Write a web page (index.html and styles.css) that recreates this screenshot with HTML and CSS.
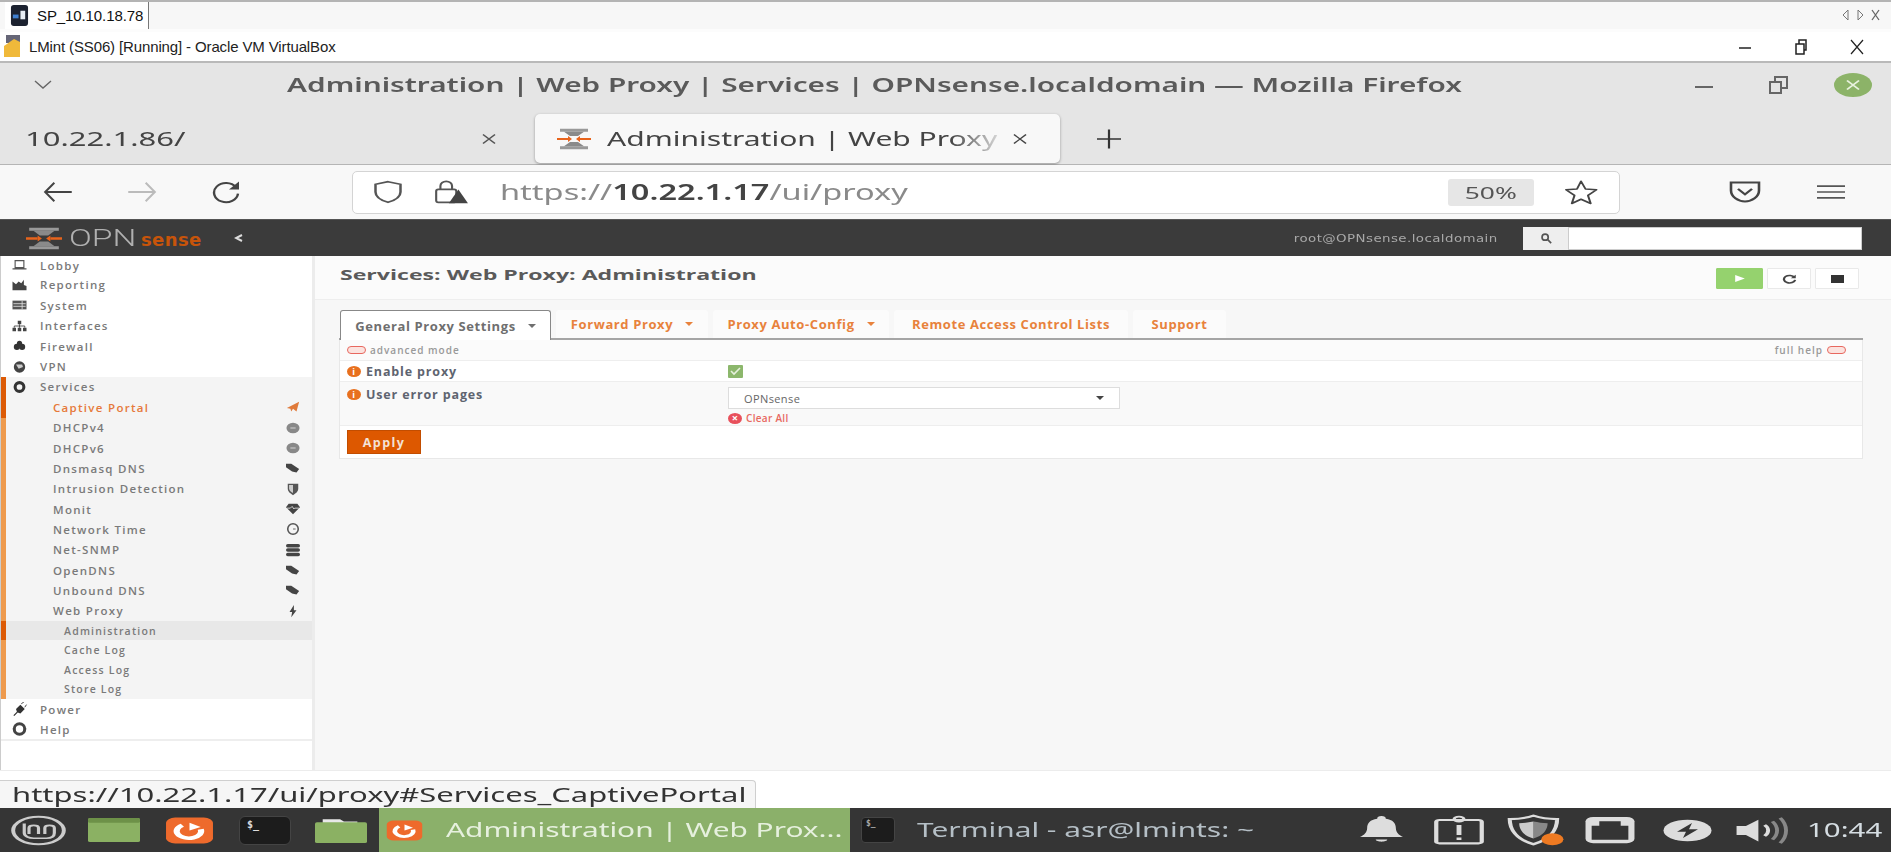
FILE: index.html
```html
<!DOCTYPE html>
<html lang="en">
<head>
    <meta charset="UTF-8">
    <title>Administration | Web Proxy | Services | OPNsense.localdomain</title>
    <link rel="stylesheet" href="styles.css">
</head>
<body>
    <div class="screen">
        <!-- remote desktop tabs -->
        <div class="rdp-bar">
            <div class="rdp-tab">
                <svg class="rdp-icon" viewBox="0 0 20 24"><rect x="1" y="1" width="18" height="22" rx="3" fill="#1c2230"/><rect x="3" y="11" width="6" height="4" fill="#3f7fd0"/><rect x="11" y="7" width="5" height="9" fill="#e8eef5"/></svg>
                <span>SP_10.10.18.78</span>
            </div>
            <div class="rdp-arrows">
                <svg width="40" height="14" viewBox="0 0 40 14"><path d="M7 2 2 7l5 5zM17 2l5 5-5 5z" fill="none" stroke="#777"/><path d="M31 2l7 10M38 2l-7 10" stroke="#666" stroke-width="1.3"/></svg>
            </div>
        </div>

        <!-- virtualbox window -->
        <div class="vbox-bar">
            <svg class="vbox-icon" viewBox="0 0 20 24"><rect x="4" y="0" width="14" height="8" fill="#667"/><path d="M2 22V11l10-7 6 3v15z" fill="#f0b93a"/></svg>
            <span class="vbox-title">LMint (SS06) [Running] - Oracle VM VirtualBox</span>
            <div class="vbox-controls">
                <svg width="14" height="14" viewBox="0 0 14 14"><path d="M1 8h12" stroke="#222" stroke-width="1.5"/></svg>
                <svg width="14" height="16" viewBox="0 0 14 16"><path d="M2 5h8v10H2zM5 5V1h7v10h-2" fill="none" stroke="#222" stroke-width="1.5"/></svg>
                <svg width="14" height="16" viewBox="0 0 14 16"><path d="M1 1l12 14M13 1 1 15" stroke="#222" stroke-width="1.2"/></svg>
            </div>
        </div>

        <!-- firefox -->
        <div class="ff-title">
            <svg class="ff-menu" width="18" height="10" viewBox="0 0 18 10"><path d="M1 1l8 7 8-7" fill="none" stroke="#666" stroke-width="1.4"/></svg>
            <span class="ff-title-text">Administration | Web Proxy | Services | OPNsense.localdomain — Mozilla Firefox</span>
            <div class="ff-controls">
                <svg width="20" height="10" viewBox="0 0 20 10"><path d="M1 7h18" stroke="#666" stroke-width="2"/></svg>
                <svg width="20" height="20" viewBox="0 0 20 20"><path d="M1 7h11v11H1zM6 7V2h12v11h-6" fill="none" stroke="#666" stroke-width="2"/></svg>
                <span class="ff-close"><svg width="16" height="12" viewBox="0 0 16 16" preserveAspectRatio="none"><path d="M2 2l12 12M14 2 2 14" stroke="#e8f2df" stroke-width="2"/></svg></span>
            </div>
        </div>
        <div class="ff-tabs">
            <div class="tab-plain">
                <span class="tab-plain-text">10.22.1.86/</span>
                <svg width="16" height="12" viewBox="0 0 16 16" preserveAspectRatio="none"><path d="M2 2l12 12M14 2 2 14" stroke="#555" stroke-width="1.5"/></svg>
            </div>
            <div class="tab-active">
                <svg class="tab-fav" viewBox="0 0 34 30" preserveAspectRatio="none"><use href="#opn-mark"/></svg>
                <span class="tab-active-text">Administration | Web Proxy</span>
                <svg width="16" height="12" viewBox="0 0 16 16" preserveAspectRatio="none"><path d="M2 2l12 12M14 2 2 14" stroke="#444" stroke-width="1.6"/></svg>
            </div>
            <svg class="tab-new" width="28" height="22" viewBox="0 0 28 28" preserveAspectRatio="none"><path d="M14 2v24M2 14h24" stroke="#333" stroke-width="2.2"/></svg>
        </div>
        <div class="ff-nav">
            <svg class="nav-back" width="34" height="22" viewBox="0 0 34 24"><path d="M32 12H3M13 2 3 12l10 10" fill="none" stroke="#444" stroke-width="2.2"/></svg>
            <svg class="nav-fwd" width="34" height="22" viewBox="0 0 34 24"><path d="M2 12h29M21 2l10 10-10 10" fill="none" stroke="#bbb" stroke-width="2.2"/></svg>
            <svg class="nav-reload" width="34" height="24" viewBox="0 0 34 30" preserveAspectRatio="none"><path d="M27 9a12 12 0 1 0 2 8" fill="none" stroke="#444" stroke-width="2.4"/><path d="M30 2v10H20z" fill="#444"/></svg>
            <div class="urlbar">
                <svg class="url-shield" width="30" height="24" viewBox="0 0 24 28" preserveAspectRatio="none"><path d="M12 2 22 5v9c0 6-5 10-10 12C7 24 2 20 2 14V5z" fill="none" stroke="#555" stroke-width="2"/></svg>
                <svg class="url-lock" width="36" height="24" viewBox="0 0 34 28" preserveAspectRatio="none"><rect x="3" y="11" width="19" height="15" rx="2" fill="none" stroke="#555" stroke-width="2"/><path d="M7 11V7a5.500 5.500 0 0 1 11 0v4" fill="none" stroke="#555" stroke-width="2"/><path d="M24 11l9 16H15z" fill="#444"/></svg>
                <span class="url-text">https://<b>10.22.1.17</b>/ui/proxy</span>
                <span class="url-zoom"><span class="url-zoom-text">50%</span></span>
                <svg class="url-star" width="36" height="26" viewBox="0 0 36 34" preserveAspectRatio="none"><path d="M18 3l4.500 10 11 1-8.500 7.500 2.700 10.500L18 26.500 8.800 32l2.700-10.500L3 14l11-1z" fill="none" stroke="#444" stroke-width="2" stroke-linejoin="round"/></svg>
            </div>
            <svg class="nav-pocket" width="32" height="22" viewBox="0 0 32 28" preserveAspectRatio="none"><path d="M2 2h28v10c0 8-7 14-14 14S2 20 2 12z" fill="none" stroke="#444" stroke-width="2.6"/><path d="M9 10l7 7 7-7" fill="none" stroke="#444" stroke-width="2.6"/></svg>
            <svg class="nav-menu" width="28" height="16" viewBox="0 0 28 22" preserveAspectRatio="none"><path d="M0 3h28M0 11h28M0 19h28" stroke="#555" stroke-width="2.4"/></svg>
        </div>

        <!-- opnsense page -->
        <div class="opn">
            <header class="opn-head">
                <svg class="opn-mark" viewBox="0 0 34 30" preserveAspectRatio="none"><use href="#opn-mark"/></svg>
                <span class="opn-logo"><span class="opn-word">OPN</span><span class="opn-sense">sense</span></span>
                <svg class="opn-collapse" width="9" height="8" viewBox="0 0 9 8"><path d="M8 1 2 4l6 3" fill="none" stroke="#ddd" stroke-width="2"/></svg>
                <span class="opn-user">root@OPNsense.localdomain</span>
                <div class="opn-search">
                    <span class="opn-search-btn"><svg width="14" height="12" viewBox="0 0 14 14"><circle cx="6" cy="6" r="3.600" fill="none" stroke="#555" stroke-width="2"/><path d="M9 9l4 4" stroke="#555" stroke-width="2"/></svg></span>
                    <span class="opn-search-input"></span>
                </div>
            </header>
            <div class="opn-body">
                <nav class="side">
                    <a class="side-item"><svg class="i"><use href="#i-laptop"/></svg>Lobby</a>
                    <a class="side-item"><svg class="i"><use href="#i-chart"/></svg>Reporting</a>
                    <a class="side-item"><svg class="i"><use href="#i-server"/></svg>System</a>
                    <a class="side-item"><svg class="i"><use href="#i-net"/></svg>Interfaces</a>
                    <a class="side-item"><svg class="i"><use href="#i-fire"/></svg>Firewall</a>
                    <a class="side-item"><svg class="i"><use href="#i-globe"/></svg>VPN</a>
                    <div class="side-group">
                        <span class="side-mark"></span>
                        <a class="side-item"><svg class="i"><use href="#i-cog"/></svg>Services</a>
                        <a class="side-sub current">Captive Portal<svg class="i-r"><use href="#i-plane"/></svg></a>
                        <a class="side-sub">DHCPv4<svg class="i-r"><use href="#i-disc"/></svg></a>
                        <a class="side-sub">DHCPv6<svg class="i-r"><use href="#i-disc"/></svg></a>
                        <a class="side-sub">Dnsmasq DNS<svg class="i-r"><use href="#i-tags"/></svg></a>
                        <a class="side-sub">Intrusion Detection<svg class="i-r"><use href="#i-shield"/></svg></a>
                        <a class="side-sub">Monit<svg class="i-r"><use href="#i-heart"/></svg></a>
                        <a class="side-sub">Network Time<svg class="i-r"><use href="#i-clock"/></svg></a>
                        <a class="side-sub">Net-SNMP<svg class="i-r"><use href="#i-db"/></svg></a>
                        <a class="side-sub">OpenDNS<svg class="i-r"><use href="#i-tags"/></svg></a>
                        <a class="side-sub">Unbound DNS<svg class="i-r"><use href="#i-tags"/></svg></a>
                        <a class="side-sub">Web Proxy<svg class="i-r"><use href="#i-bolt"/></svg></a>
                        <a class="side-leaf active">Administration</a>
                        <a class="side-leaf">Cache Log</a>
                        <a class="side-leaf">Access Log</a>
                        <a class="side-leaf">Store Log</a>
                    </div>
                    <a class="side-item"><svg class="i"><use href="#i-plug"/></svg>Power</a>
                    <a class="side-item last"><svg class="i"><use href="#i-help"/></svg>Help</a>
                </nav>
                <main class="main">
                    <div class="page-head">
                        <h1>Services: Web Proxy: Administration</h1>
                        <div class="svc-btns">
                            <span class="svc-btn go"><svg width="12" height="9" viewBox="0 0 10 10" preserveAspectRatio="none"><path d="M1 1l8 4-8 4z" fill="#fff"/></svg></span>
                            <span class="svc-btn"><svg width="15" height="10" viewBox="0 0 12 12" preserveAspectRatio="none"><path d="M10 4a4.500 4.500 0 1 0 .5 3" fill="none" stroke="#444" stroke-width="1.800"/><path d="M11 1v4H7z" fill="#444"/></svg></span>
                            <span class="svc-btn"><svg width="13" height="8" viewBox="0 0 12 8" preserveAspectRatio="none"><rect width="12" height="8" fill="#333"/></svg></span>
                        </div>
                    </div>
                    <div class="content">
                        <ul class="tabs">
                            <li class="tab on">General Proxy Settings<i class="caret"></i></li>
                            <li class="tab t-forward">Forward Proxy<i class="caret"></i></li>
                            <li class="tab t-pac">Proxy Auto-Config<i class="caret"></i></li>
                            <li class="tab t-remote">Remote Access Control Lists</li>
                            <li class="tab t-support">Support</li>
                        </ul>
                        <form class="panel">
                            <div class="row row-help">
                                <span class="adv"><i class="toggle"></i>advanced mode</span>
                                <span class="adv">full help<i class="toggle after"></i></span>
                            </div>
                            <div class="row row-enable">
                                <label class="lbl"><i class="info">i</i>Enable proxy</label>
                                <span class="check"><svg width="11" height="9" viewBox="0 0 11 9"><path d="M1 4l3 3 6-6" fill="none" stroke="#e6f0dc" stroke-width="1.600"/></svg></span>
                            </div>
                            <div class="row row-pages">
                                <label class="lbl"><i class="info">i</i>User error pages</label>
                                <div class="field">
                                    <div class="select">OPNsense<i class="caret dark"></i></div>
                                    <span class="clear"><i class="clear-x">×</i>Clear All</span>
                                </div>
                            </div>
                            <div class="row row-apply">
                                <button class="apply" type="button">Apply</button>
                            </div>
                        </form>
                    </div>
                </main>
            </div>
        </div>

        <div class="status-strip">
            <div class="status-link"><span class="status-text">https://10.22.1.17/ui/proxy#Services_CaptivePortal</span></div>
        </div>

        <!-- mint panel -->
        <footer class="panel-bar">
            <svg class="p-mint" viewBox="0 0 36 36" preserveAspectRatio="none"><circle cx="18" cy="18" r="16" fill="none" stroke="#ccc" stroke-width="2.500"/><path d="M9 10v11c0 4 3 6 6 6h8c3 0 5-2 5-6v-6c0-2-1-3-3-3s-3 1-3 3v7M18 22v-7c0-2-1-3-3-3s-3 1-3 3v7" fill="none" stroke="#ccc" stroke-width="2"/></svg>
            <svg class="p-win" viewBox="0 0 54 30" preserveAspectRatio="none"><rect width="54" height="30" rx="2" fill="#8bb163"/><rect width="54" height="6" rx="2" fill="#6d9148"/></svg>
            <svg class="p-ff" viewBox="0 0 48 46" preserveAspectRatio="none"><use href="#ff-glyph"/></svg>
            <span class="p-term"><b>$_</b></span>
            <svg class="p-folder" viewBox="0 0 54 34" preserveAspectRatio="none"><path d="M8 6V3h18l4 3h14v3H8z" fill="#e8e8e8"/><rect y="7" width="54" height="27" rx="2" fill="#8bb163"/></svg>
            <div class="p-task-on">
                <svg class="p-ff small" viewBox="0 0 48 46" preserveAspectRatio="none"><use href="#ff-glyph"/></svg>
                <span class="task-text">Administration | Web Prox...</span>
            </div>
            <div class="p-task">
                <span class="p-term small"><b>$_</b></span>
                <span class="task-text">Terminal - asr@lmints: ~</span>
            </div>
            <div class="tray">
                <svg class="t-bell" viewBox="0 0 30 34" preserveAspectRatio="none"><path d="M15 1c2 0 3 1 3 3 5 1 7 5 7 10 0 5 2 8 5 10H0c3-2 5-5 5-10 0-5 2-9 7-10 0-2 1-3 3-3z" fill="#ddd"/><path d="M11 27h8c0 3-8 3-8 0z" fill="#ddd"/></svg>
                <svg class="t-clip" viewBox="0 0 32 36" preserveAspectRatio="none"><rect x="2" y="6" width="28" height="28" rx="2" fill="none" stroke="#ddd" stroke-width="2.600"/><circle cx="16" cy="5" r="3" fill="none" stroke="#ddd" stroke-width="2"/><path d="M16 12v12M16 27v3" stroke="#ddd" stroke-width="3"/></svg>
                <svg class="t-shield" viewBox="0 0 38 38" preserveAspectRatio="none"><path d="M18 2c5 3 10 4 15 4 0 12-4 24-15 30C7 30 3 18 3 6c5 0 10-1 15-4z" fill="none" stroke="#ddd" stroke-width="2.600"/><path d="M18 9c3 1 6 2 9 2 0 8-3 15-9 18z" fill="#888"/><path d="M18 9c-3 1-6 2-9 2 0 8 3 15 9 18z" fill="#ccc"/><circle cx="30" cy="30" r="7" fill="#ee7a22"/></svg>
                <svg class="t-net" viewBox="0 0 34 32" preserveAspectRatio="none"><rect x="1" y="1" width="32" height="30" rx="5" fill="#ddd"/><path d="M5 11h5V6h14v5h5v16H5z" fill="#353535"/></svg>
                <svg class="t-power" viewBox="0 0 34 34" preserveAspectRatio="none"><circle cx="17" cy="17" r="16" fill="#ddd"/><path d="M20 6 10 19h6l-2 9 10-13h-6z" fill="#353535"/></svg>
                <svg class="t-vol" viewBox="0 0 34 32" preserveAspectRatio="none"><path d="M1 11h6l8-7v24l-8-7H1z" fill="#ddd"/><path d="M19 10c3 3 3 9 0 12" fill="none" stroke="#ddd" stroke-width="2.500"/><path d="M24 6c4 6 4 14 0 20M29 2c5 8 5 20 0 28" fill="none" stroke="#888" stroke-width="2.500"/></svg>
                <span class="clock">10:44</span>
            </div>
        </footer>
    </div>

    <svg class="defs" aria-hidden="true">
        <defs>
            <g id="opn-mark">
                <path d="M3 1h28v4H3zM3 25h28v4H3z" fill="#999"/>
                <path d="M7 5h20l-6 6H13zM13 19h8l6 6H7z" fill="#8a8a8a"/>
                <path d="M0 15h11M23 15h11" stroke="#e8641c" stroke-width="3"/>
                <path d="M11 11l4 4-4 4zM23 11l-4 4 4 4z" fill="#e8641c"/>
            </g>
            <g id="ff-glyph">
                <rect x="1" y="1" width="46" height="44" rx="9" fill="#ee6a2c"/>
                <path d="M17 14a12 12 0 1 0 18 7" fill="none" stroke="#fff" stroke-width="6"/>
                <path d="M24 10l11 7-11 6z" fill="#fff"/>
            </g>
            <symbol id="i-laptop" viewBox="0 0 16 16"><path d="M3 3h10v8H3zM0 12.500h16" fill="none" stroke="#555" stroke-width="1.300"/></symbol>
            <symbol id="i-chart" viewBox="0 0 16 16"><path d="M0 14V4l4 3 3-3 3 2 3-4v6l3 1v5z" fill="#444"/></symbol>
            <symbol id="i-server" viewBox="0 0 16 16"><path d="M0 3h16v10H0z" fill="#555"/><path d="M1 6.500h14M1 9.500h14M11 3v10" stroke="#ddd"/></symbol>
            <symbol id="i-net" viewBox="0 0 16 16"><path d="M6 2h4v4H6zM0 10h4v4H0zM6 10h4v4H6zM12 10h4v4h-4z" fill="#444"/><path d="M8 6v4M2 10V8h12v2" stroke="#444" fill="none"/></symbol>
            <symbol id="i-fire" viewBox="0 0 16 16"><circle cx="5" cy="9" r="3.500" fill="#333"/><circle cx="11" cy="9" r="3.500" fill="#333"/><circle cx="8" cy="5" r="3" fill="#333"/></symbol>
            <symbol id="i-globe" viewBox="0 0 16 16"><circle cx="8" cy="8" r="6.500" fill="#444"/><path d="M4 5h7l1 3-5 2z" fill="#ccc"/></symbol>
            <symbol id="i-cog" viewBox="0 0 16 16"><circle cx="8" cy="8" r="5" fill="none" stroke="#333" stroke-width="3.500"/></symbol>
            <symbol id="i-plane" viewBox="0 0 16 16"><path d="M1 9 15 2l-3 11-4-3-2 3-1-3z" fill="#e07a3a"/></symbol>
            <symbol id="i-disc" viewBox="0 0 16 16"><ellipse cx="8" cy="8" rx="7.500" ry="6" fill="#888"/><path d="M5 8h6" stroke="#ddd"/></symbol>
            <symbol id="i-tags" viewBox="0 0 16 16"><path d="M0 3h6l9 6-3 4-5-1-7-5z" fill="#444"/></symbol>
            <symbol id="i-shield" viewBox="0 0 16 16"><path d="M2 2h12v6c0 3-3 5-6 7-3-2-6-4-6-7z" fill="#555"/><path d="M3.500 3.500H8v9c-2-1-4.500-2.500-4.500-5z" fill="#ccc"/></symbol>
            <symbol id="i-heart" viewBox="0 0 16 16"><path d="M8 14 0 6l3-4h10l3 4z" fill="#444"/><path d="M1 7h4l2-2 2 3 1-1h5" fill="none" stroke="#ddd"/></symbol>
            <symbol id="i-clock" viewBox="0 0 16 16"><circle cx="8" cy="8" r="6" fill="none" stroke="#555" stroke-width="1.800"/><path d="M8 8h3" stroke="#555"/></symbol>
            <symbol id="i-db" viewBox="0 0 16 16"><rect y="1" width="16" height="4" rx="2" fill="#444"/><rect y="6" width="16" height="4" rx="2" fill="#444"/><rect y="11" width="16" height="4" rx="2" fill="#444"/></symbol>
            <symbol id="i-bolt" viewBox="0 0 16 16"><path d="M9 1 4 9h3l-1 6 6-8H9z" fill="#444"/></symbol>
            <symbol id="i-plug" viewBox="0 0 16 16"><path d="M1 15l4-4-1-3 5-5 5 5-5 5-3-1-4 4z" fill="#333"/><path d="M10 2l3-2M14 6l2-3" stroke="#333"/></symbol>
            <symbol id="i-help" viewBox="0 0 16 16"><circle cx="8" cy="8" r="6" fill="none" stroke="#444" stroke-width="3.500"/></symbol>
        </defs>
    </svg>
</body>
</html>
```

FILE: styles.css
```css
* {
    box-sizing: border-box;
}

html, body {
    margin: 0;
    padding: 0;
    overflow: hidden;
    background-color: #fff;
}

.screen {
    width: 1891px;
    height: 852px;
    display: flex;
    flex-direction: column;
    overflow: hidden;
    font-family: "Open Sans", sans-serif;
}

.defs {
    position: absolute;
    width: 0;
    height: 0;
}

/* remote desktop tabs */
.rdp-bar {
    height: 32px;
    flex: none;
    display: flex;
    align-items: center;
    justify-content: space-between;
    background-color: #f7f7f7;
    border-top: 2px solid #b4b4b4;
    border-bottom: 3px solid #fcfcfc;
    padding: 0 10px 0 5px;
}

.rdp-tab {
    display: flex;
    align-items: center;
    gap: 8px;
    height: 27px;
    width: 144px;
    padding-left: 5px;
    background-color: #fff;
    border-right: 1px solid #777;
    font-family: "Liberation Sans", sans-serif;
    font-size: 15px;
    letter-spacing: -0.1px;
    color: #111;
}

.rdp-icon {
    width: 19px;
    height: 23px;
}

.vbox-bar {
    height: 31px;
    flex: none;
    display: flex;
    align-items: center;
    background-color: #fff;
    border-bottom: 2px solid #b9b9b9;
    padding: 0 27px 0 2px;
}

.vbox-icon {
    width: 20px;
    height: 24px;
    margin-right: 7px;
}

.vbox-title {
    font-family: "Liberation Sans", sans-serif;
    font-size: 15px;
    letter-spacing: -0.13px;
    color: #222;
}

.vbox-controls {
    margin-left: auto;
    display: flex;
    align-items: center;
    gap: 42px;
}

/* firefox: the remote screen is stretched sideways, hence the scaleX on its text */
.ff-title {
    height: 50px;
    flex: none;
    display: flex;
    align-items: center;
    background-color: #e5e5e5;
    padding: 0 0 6px 34px;
}

.ff-menu {
    margin-right: 235px;
}

.ff-title-text {
    font-family: "Noto Sans", sans-serif;
    font-size: 19px;
    font-weight: 600;
    color: #5a5a5a;
    white-space: nowrap;
    transform: scaleX(1.567);
    transform-origin: left center;
}

.ff-controls {
    margin-left: auto;
    display: flex;
    align-items: center;
    gap: 55px;
    padding-right: 19px;
}

.ff-close {
    width: 38px;
    height: 24px;
    border-radius: 50%;
    background-color: #8cb368;
    display: flex;
    align-items: center;
    justify-content: center;
    margin-left: -10px;
}

.ff-tabs {
    height: 52px;
    flex: none;
    display: flex;
    align-items: center;
    background-color: #e5e5e5;
    border-bottom: 1px solid #b5b5b5;
}

.tab-plain {
    width: 535px;
    display: flex;
    align-items: center;
    justify-content: space-between;
    padding: 0 38px 0 25px;
    font-family: "Noto Sans", sans-serif;
    font-size: 19px;
    color: #444;
}

.tab-plain-text {
    transform: scaleX(1.63);
    transform-origin: left center;
}

.tab-active {
    width: 525px;
    height: 49px;
    display: flex;
    align-items: center;
    padding: 0 32px 0 22px;
    background-color: #f8f8f8;
    border-radius: 5px;
    box-shadow: 0 1px 3px rgba(0,0,0,0.35);
    font-family: "Noto Sans", sans-serif;
    font-size: 19px;
    color: #444;
}

.tab-fav {
    width: 34px;
    height: 22px;
    flex: none;
    margin-right: 16px;
}

.tab-active-text {
    flex: none;
    white-space: nowrap;
    transform: scaleX(1.58);
    transform-origin: left center;
    -webkit-mask-image: linear-gradient(to right, #000 88%, rgba(0,0,0,0.2) 100%);
    mask-image: linear-gradient(to right, #000 88%, rgba(0,0,0,0.2) 100%);
}

.tab-active svg:last-child {
    margin-left: auto;
}

.tab-new {
    margin-left: 35px;
}

.ff-nav {
    height: 54px;
    flex: none;
    display: flex;
    align-items: center;
    background-color: #f8f8f8;
    padding-left: 41px;
}

.nav-fwd {
    margin-left: 50px;
}

.nav-reload {
    margin-left: 50px;
}

.urlbar {
    width: 1268px;
    height: 43px;
    margin-left: 109px;
    display: flex;
    align-items: center;
    background-color: #fff;
    border: 1px solid #d4d4d4;
    border-radius: 5px;
    padding-left: 20px;
}

.url-lock {
    margin-left: 30px;
}

.url-text {
    margin-left: 31px;
    font-family: "Noto Sans", sans-serif;
    font-size: 21px;
    color: #8a8a8a;
    white-space: nowrap;
    transform: scaleX(1.55);
    transform-origin: left center;
}

.url-text b {
    font-weight: 600;
    color: #444;
}

.url-zoom {
    margin-left: auto;
    width: 86px;
    height: 27px;
    display: flex;
    align-items: center;
    justify-content: center;
    background-color: #e6e6e6;
    border-radius: 3px;
    font-family: "Noto Sans", sans-serif;
    font-size: 17px;
    color: #555;
}

.url-zoom-text {
    transform: scaleX(1.55);
}

.url-star {
    margin: 0 20px 0 29px;
}

.nav-pocket {
    margin-left: 109px;
}

.nav-menu {
    margin-left: 56px;
}

/* opnsense page */
.opn {
    height: 551px;
    flex: none;
    display: flex;
    flex-direction: column;
    filter: blur(0.55px);
}

.opn-head {
    height: 37px;
    flex: none;
    display: flex;
    align-items: center;
    background-color: #3b3b3b;
    border-top: 1px solid #555;
    padding-left: 26px;
}

.opn-mark {
    width: 36px;
    height: 23px;
}

.opn-logo {
    width: 165px;
    margin-left: 7px;
    display: flex;
    align-items: baseline;
    white-space: nowrap;
}

.opn-word {
    width: 72px;
    font-family: "Roboto", sans-serif;
    font-size: 24px;
    font-weight: 300;
    line-height: 30px;
    color: #b0b0b0;
    transform: scaleX(1.4);
    transform-origin: left center;
}

.opn-sense {
    font-family: "DejaVu Sans", sans-serif;
    font-size: 18px;
    font-weight: 700;
    letter-spacing: 0.4px;
    color: #c7540a;
}

.opn-user {
    margin-left: auto;
    font-family: "DejaVu Sans", sans-serif;
    font-size: 11px;
    letter-spacing: 0.35px;
    color: #a9a9a9;
    transform: scaleX(1.216);
    transform-origin: right center;
}

.opn-search {
    display: flex;
    height: 23px;
    margin: 0 29px 0 25px;
}

.opn-search-btn {
    width: 45px;
    display: flex;
    align-items: center;
    justify-content: center;
    background-color: #eee;
}

.opn-search-input {
    width: 294px;
    background-color: #fff;
    border: 1px solid #ccc;
}

.opn-body {
    flex: 1;
    display: flex;
    min-height: 0;
}

.side {
    width: 315px;
    flex: none;
    display: flex;
    flex-direction: column;
    background-color: #fff;
    border-left: 1px solid #ccc;
    border-right: 3px solid #ececec;
    color: #7a7a7a;
    font-size: 11.5px;
    font-weight: 600;
    letter-spacing: 1.3px;
}

.side-item {
    height: 20.4px;
    flex: none;
    display: flex;
    align-items: center;
    padding-left: 10px;
}

.side > .side-item:first-child {
    height: 18.8px;
}

.side-item.last {
    height: 22px;
    border-bottom: 2px solid #eee;
}

.i {
    width: 17px;
    height: 14px;
    margin-right: 12px;
    flex: none;
}

.side-group {
    position: relative;
    background-color: #f4f4f4;
    border-left: 5px solid #ee9a4d;
}

.side-group .side-item {
    padding-left: 5px;
}

.side-mark {
    position: absolute;
    left: -5px;
    top: 0;
    width: 5px;
    height: 41px;
    background-color: #dc5a05;
}

.side-sub {
    height: 20.35px;
    display: flex;
    align-items: center;
    justify-content: space-between;
    padding: 0 11px 0 47px;
}

.current {
    color: #e6793a;
}

.i-r {
    width: 16px;
    height: 14px;
    flex: none;
}

.side-leaf {
    position: relative;
    height: 19.5px;
    display: flex;
    align-items: center;
    padding-left: 58px;
    font-size: 10.5px;
    letter-spacing: 1.2px;
}

.side-leaf.active {
    background-color: #e8e8e8;
}

.side-leaf.active::before {
    content: "";
    position: absolute;
    left: -5px;
    top: 0;
    bottom: 0;
    width: 5px;
    background-color: #dc5a05;
}

.main {
    flex: 1;
    display: flex;
    flex-direction: column;
    background-color: #f7f7f7;
}

.page-head {
    height: 44px;
    flex: none;
    display: flex;
    align-items: center;
    justify-content: space-between;
    background-color: #fbfbfb;
    border-bottom: 1px solid #eee;
    padding: 0 32px 0 25px;
}

.page-head h1 {
    margin: 0 0 6px 0;
    font-size: 14px;
    font-weight: 700;
    color: #5a5a5a;
    transform: scaleX(1.65);
    transform-origin: left center;
}

.svc-btns {
    display: flex;
    gap: 4px;
    margin-top: 2px;
}

.svc-btn {
    width: 44px;
    height: 21px;
    display: flex;
    align-items: center;
    justify-content: center;
    background-color: #fff;
    border: 1px solid #e9e9e9;
    border-radius: 1px;
}

.svc-btn.go {
    width: 47px;
    background-color: #95d26e;
    border-color: #95d26e;
}

.content {
    padding: 10px 28px 0 24px;
}

.tabs {
    list-style: none;
    margin: 0;
    padding: 0 0 0 1px;
    display: flex;
    gap: 5px;
    height: 30px;
    border-bottom: 2px solid #a5a5a5;
}

.tab {
    display: flex;
    align-items: center;
    justify-content: center;
    height: 28px;
    background-color: #fbfbfb;
    border-radius: 3px 3px 0 0;
    font-size: 13px;
    font-weight: 700;
    letter-spacing: 0.6px;
    color: #e8823c;
    white-space: nowrap;
}

.tab.on {
    width: 211px;
    height: 30px;
    background-color: #fff;
    color: #6f6f6f;
    border: 1px solid #888;
    border-bottom: none;
}

.t-forward {
    width: 152px;
}

.t-pac {
    width: 176px;
}

.t-remote {
    width: 234px;
}

.t-support {
    width: 93px;
}

.caret {
    display: inline-block;
    margin-left: 12px;
    border-left: 4px solid transparent;
    border-right: 4px solid transparent;
    border-top: 4px solid currentColor;
}

.caret.dark {
    margin-left: auto;
    color: #444;
}

.panel {
    display: block;
    background-color: #fff;
    border: 1px solid #e8e8e8;
    border-top: none;
    margin: 0;
}

.row {
    display: flex;
    border-bottom: 1px solid #eee;
    padding-left: 7px;
}

.row-help {
    height: 21px;
    align-items: center;
    justify-content: space-between;
    padding-right: 16px;
    background-color: #fbfbfb;
}

.adv {
    display: flex;
    align-items: center;
    font-size: 10px;
    font-weight: 600;
    letter-spacing: 1px;
    color: #999;
}

.toggle {
    display: inline-block;
    width: 19px;
    height: 8px;
    margin-right: 4px;
    border: 1px solid #e8685f;
    border-radius: 5px;
    background-color: #fbe3df;
}

.toggle.after {
    margin: 0 0 0 4px;
}

.row-enable {
    height: 21px;
    align-items: center;
}

.lbl {
    width: 381px;
    flex: none;
    display: flex;
    align-items: center;
    font-size: 12.5px;
    font-weight: 700;
    letter-spacing: 0.85px;
    color: #5e6470;
}

.info {
    width: 14px;
    height: 11px;
    flex: none;
    margin-right: 5px;
    border-radius: 50%;
    background-color: #e8701e;
    color: #fff;
    font-size: 9px;
    font-style: normal;
    line-height: 11px;
    text-align: center;
}

.check {
    width: 15px;
    height: 13px;
    display: flex;
    align-items: center;
    justify-content: center;
    background-color: #8cb76c;
    border-radius: 1px;
}

.row-pages {
    height: 44px;
    padding-top: 5px;
    background-color: #f9f9f9;
}

.row-pages .lbl {
    height: 14px;
}

.field {
    display: flex;
    flex-direction: column;
    width: 392px;
}

.select {
    height: 23px;
    display: flex;
    align-items: center;
    padding: 0 15px 0 15px;
    background-color: #fff;
    border: 1px solid #ddd;
    font-size: 11px;
    letter-spacing: 0.4px;
    color: #666;
}

.clear {
    display: flex;
    align-items: center;
    margin-top: 2px;
    font-size: 10px;
    font-weight: 600;
    letter-spacing: 0.3px;
    color: #e8685f;
}

.clear-x {
    width: 14px;
    height: 11px;
    margin-right: 4px;
    border-radius: 50%;
    background-color: #e8505b;
    color: #fff;
    font-size: 11px;
    font-style: normal;
    font-weight: 700;
    line-height: 10px;
    text-align: center;
}

.row-apply {
    height: 32px;
    align-items: center;
    border-bottom: none;
}

.apply {
    width: 74px;
    height: 24px;
    padding: 0;
    background-color: #dd5800;
    border: 1px solid #c24d00;
    color: #f3e2d6;
    font-family: "Open Sans", sans-serif;
    font-size: 12.5px;
    font-weight: 700;
    letter-spacing: 1.4px;
}

/* status */
.status-strip {
    flex: 1;
    display: flex;
    align-items: flex-end;
    background-color: #fff;
    border-top: 1px solid #ececec;
}

.status-link {
    width: 756px;
    height: 28px;
    display: flex;
    align-items: center;
    padding-left: 12px;
    background-color: #f6f6f6;
    border: 1px solid #cfcfcf;
    border-bottom: none;
    border-left: none;
    border-radius: 0 4px 0 0;
    font-family: "Noto Sans", sans-serif;
    font-size: 19px;
    color: #333;
    white-space: nowrap;
}

.status-text {
    transform: scaleX(1.63);
    transform-origin: left center;
}

/* mint panel */
.panel-bar {
    height: 44px;
    flex: none;
    display: flex;
    align-items: center;
    background-color: #353535;
    font-family: "Noto Sans", sans-serif;
    font-size: 19px;
}

.p-mint {
    width: 57px;
    height: 31px;
    margin-left: 10px;
}

.p-win {
    width: 52px;
    height: 24px;
    margin-left: 21px;
}

.p-ff {
    width: 49px;
    height: 27px;
    margin-left: 25px;
}

.p-ff.small {
    width: 37px;
    height: 21px;
    margin-left: 0;
}

.p-term {
    width: 52px;
    height: 29px;
    margin-left: 25px;
    padding: 0 0 0 7px;
    background-color: #1c1c1c;
    border: 1px solid #444;
    border-radius: 6px;
    color: #ddd;
    font-family: "DejaVu Sans Mono", monospace;
    font-size: 10px;
    line-height: 16px;
}

.p-term.small {
    width: 34px;
    height: 26px;
    margin-left: 0;
    padding: 0 0 0 4px;
    font-size: 8px;
    line-height: 12px;
    color: #aaa;
    border-radius: 4px;
}

.p-folder {
    width: 52px;
    height: 26px;
    margin-left: 24px;
}

.p-task-on {
    width: 471px;
    height: 44px;
    margin-left: 12px;
    display: flex;
    align-items: center;
    gap: 23px;
    padding-left: 7px;
    background-color: #8bb06a;
    color: #e6f0de;
    white-space: nowrap;
}

.p-task {
    display: flex;
    align-items: center;
    gap: 22px;
    margin-left: 11px;
    color: #b5bfc6;
    white-space: nowrap;
}

.task-text {
    transform: scaleX(1.57);
    transform-origin: left center;
}

.tray {
    margin-left: auto;
    display: flex;
    align-items: center;
    padding-right: 34px;
}

.t-bell {
    width: 43px;
    height: 31px;
}

.t-clip {
    width: 52px;
    height: 30px;
    margin-left: 30px;
}

.t-shield {
    width: 60px;
    height: 32px;
    margin-left: 20px;
}

.t-net {
    width: 52px;
    height: 28px;
    margin-left: 19px;
}

.t-power {
    width: 51px;
    height: 23px;
    margin-left: 26px;
}

.t-vol {
    width: 53px;
    height: 29px;
    margin-left: 22px;
}

.clock {
    width: 50px;
    margin-left: 19px;
    color: #d5dde2;
    white-space: nowrap;
    transform: scaleX(1.55);
    transform-origin: left center;
}
```
